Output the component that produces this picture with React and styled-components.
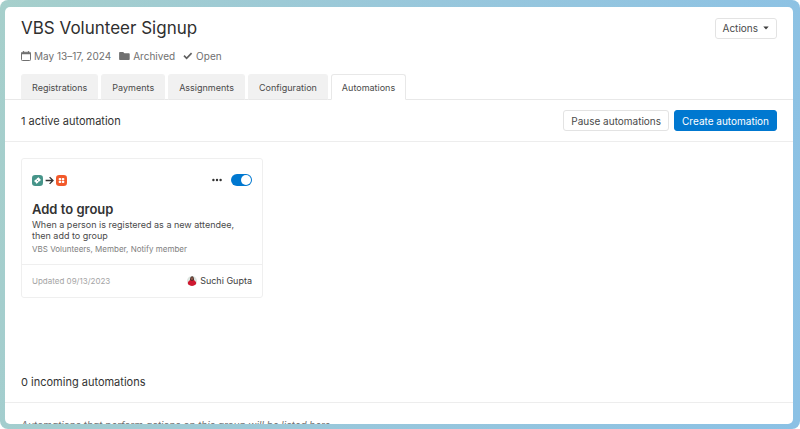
import { useState } from "react";
import styled, { createGlobalStyle } from "styled-components";

const GlobalStyle = createGlobalStyle`
    * {
        box-sizing: border-box;
    }
    body {
        margin: 0;
        background: #fff;
        color: #3d3d3d;
        font-family: Inter, "Liberation Sans", sans-serif;
        font-size: 10px;
        line-height: 16px;
    }
    h1, h2, h3, p {
        margin: 0;
        font-weight: 400;
    }
    button {
        font-family: inherit;
        cursor: pointer;
    }
`;

const Frame = styled.div`
    display: flex;
    height: 100vh;
    padding: 7px 7px 5px 5px;
    border-radius: 8px;
    background: linear-gradient(100deg, #a6cfcb, #98c7dc 50%, #8bc1e5);
    overflow: hidden;
`;

const Page = styled.main`
    flex: 1;
    border-radius: 5px;
    background: #fff;
    overflow: hidden;
`;

const Header = styled.header`
    padding: 9px 16px 0;
    border-bottom: 1px solid #e8e8e8;
`;

const TitleRow = styled.div`
    display: flex;
    align-items: center;
    justify-content: space-between;
`;

const Title = styled.h1`
    font-size: 17px;
    line-height: 24px;
    color: #2f2f2f;
`;

const Meta = styled.div`
    display: flex;
    gap: 8px;
    margin-top: 8px;
    color: #707070;
`;

const MetaItem = styled.span`
    display: flex;
    align-items: center;
    gap: 3px;
`;

const Button = styled.button`
    display: flex;
    align-items: center;
    gap: 5px;
    height: 21px;
    padding: 0 7px;
    border: 1px solid ${({ $primary }) => ($primary ? "#0078d0" : "#e3e3e3")};
    border-radius: 3px;
    background: ${({ $primary }) => ($primary ? "#0078d0" : "#fff")};
    color: ${({ $primary }) => ($primary ? "#fff" : "#4a4a4a")};
    font-size: 10px;
    line-height: 16px;
`;

const Tabs = styled.nav`
    display: flex;
    gap: 3px;
    margin: 10px 0 -1px;
`;

const Tab = styled.a`
    height: 26px;
    padding: 0 10px;
    border: 1px solid ${({ $active }) => ($active ? "#e8e8e8" : "#f1f1f1")};
    border-bottom-color: ${({ $active }) => ($active ? "#fff" : "#e8e8e8")};
    border-radius: 3px 3px 0 0;
    background: ${({ $active }) => ($active ? "#fff" : "#f1f1f1")};
    color: #4a4a4a;
    font-size: 9px;
    line-height: 25px;
    text-decoration: none;
`;

const SectionBar = styled.div`
    display: flex;
    align-items: center;
    justify-content: space-between;
    height: 42px;
    padding: 0 16px;
    border-bottom: 1px solid #ededed;
`;

const SectionTitle = styled.h2`
    font-size: 11px;
    line-height: 16px;
    color: #333;
`;

const ButtonGroup = styled.div`
    display: flex;
    gap: 5px;
`;

const CardList = styled.div`
    padding: 16px 16px 63px;
`;

const Card = styled.article`
    width: 242px;
    max-width: 100%;
    border: 1px solid #efefef;
    border-radius: 3px;
`;

const CardBody = styled.div`
    padding: 14px 10px 9px;
`;

const CardTop = styled.div`
    display: flex;
    align-items: center;
    justify-content: space-between;
    height: 14px;
`;

const IconRow = styled.div`
    display: flex;
    align-items: center;
    gap: 2px;
`;

const Controls = styled.div`
    display: flex;
    align-items: center;
    gap: 9px;
`;

const MoreButton = styled.button`
    display: flex;
    padding: 0;
    border: 0;
    background: none;
`;

const Switch = styled.input`
    appearance: none;
    display: flex;
    align-items: center;
    width: 21px;
    height: 12px;
    margin: 0;
    padding: 0 1px;
    border-radius: 6px;
    background: #bdbdbd;
    cursor: pointer;

    &::before {
        content: "";
        width: 10px;
        height: 10px;
        border-radius: 50%;
        background: #fff;
    }
    &:checked {
        justify-content: flex-end;
        background: #0078d0;
    }
`;

const CardTitle = styled.h3`
    margin: 14px 0 2px;
    font-size: 13px;
    font-weight: 600;
    line-height: 16px;
    color: #333;
`;

const Description = styled.p`
    max-width: 208px;
    font-size: 9px;
    line-height: 11px;
    color: #4a4a4a;
`;

const Details = styled.p`
    margin-top: 3px;
    font-size: 8px;
    line-height: 11px;
    color: #808080;
`;

const CardFooter = styled.footer`
    display: flex;
    align-items: center;
    justify-content: space-between;
    height: 33px;
    padding: 0 10px;
    border-top: 1px solid #efefef;
`;

const Updated = styled.span`
    font-size: 8px;
    color: #a5a5a5;
`;

const Person = styled.span`
    display: flex;
    align-items: center;
    gap: 3px;
    font-size: 9px;
`;

const EmptyNote = styled.p`
    padding: 14px 16px;
    font-style: italic;
    color: #707070;
`;

const CalendarIcon = () => (
    <svg width="10" height="10" viewBox="0 0 10 10" fill="none" stroke="#707070">
        <rect x=".5" y="1.3" width="9" height="8.2" rx=".8" />
        <path d="M.5 2.4h9" strokeWidth="1.6" />
        <path d="M2.6 0v2M7.4 0v2" />
    </svg>
);

const FolderIcon = () => (
    <svg width="11" height="10" viewBox="0 0 11 10" fill="#707070">
        <path d="M.9 1h3.3l1.2 1.3h4.5q.8 0 .8.8v5.2q0 .8-.8.8h-9q-.8 0-.8-.8V1.8Q.1 1 .9 1z" />
    </svg>
);

const CheckIcon = () => (
    <svg width="10" height="10" viewBox="0 0 10 10" fill="none" stroke="#606060" strokeWidth="1.7">
        <path d="M1 4.7l2.6 2.6 5-5.1" />
    </svg>
);

const CaretIcon = () => (
    <svg width="6" height="4" viewBox="0 0 6 4" fill="#3d3d3d">
        <path d="M.3.5h5.4L3 3.6z" />
    </svg>
);

const RegistrationsIcon = () => (
    <svg width="11" height="11" viewBox="0 0 11 11">
        <rect width="11" height="11" rx="3.2" fill="#469489" />
        <g transform="rotate(-40 5.5 5.5)" fill="#fff">
            <path d="M2.6 3.6h2.2q.7.8 1.4 0h2.2v3.8H6.2q-.7-.8-1.4 0H2.6V6.3q.8-.8 0-1.6z" />
        </g>
        <circle cx="5.5" cy="5.5" r=".6" fill="#469489" />
    </svg>
);

const GroupsIcon = () => (
    <svg width="11" height="11" viewBox="0 0 11 11">
        <rect width="11" height="11" rx="3.2" fill="#f2592a" />
        <g fill="#fff">
            <rect x="2.7" y="2.9" width="2.5" height="2.3" rx=".8" />
            <rect x="5.8" y="2.9" width="2.5" height="2.3" rx=".8" />
            <rect x="2.7" y="5.8" width="2.5" height="2.3" rx=".8" />
            <rect x="5.8" y="5.8" width="2.5" height="2.3" rx=".8" />
        </g>
    </svg>
);

const ArrowIcon = () => (
    <svg width="9" height="9" viewBox="0 0 9 9" fill="none" stroke="#333" strokeWidth="1.3">
        <path d="M.6 4.5h7.2M4.6 1.1L8 4.5 4.6 7.9" />
    </svg>
);

const DotsIcon = () => (
    <svg width="10" height="4" viewBox="0 0 10 4" fill="#333">
        <circle cx="1.4" cy="2" r="1.2" />
        <circle cx="5" cy="2" r="1.2" />
        <circle cx="8.6" cy="2" r="1.2" />
    </svg>
);

const AvatarIcon = () => (
    <svg width="10" height="10" viewBox="0 0 10 10">
        <clipPath id="avatar">
            <circle cx="5" cy="5" r="5" />
        </clipPath>
        <g clipPath="url(#avatar)">
            <rect width="10" height="10" fill="#dce4df" />
            <path d="M3 5.2Q2.8.4 5 .2T7 5.2z" fill="#4a2c28" />
            <path d="M.3 10Q.4 4.6 3.4 3.9L5 4.9l1.6-1Q9.6 4.6 9.7 10z" fill="#cf1930" />
            <ellipse cx="5" cy="2.7" rx=".9" ry="1.4" fill="#9a6250" />
        </g>
    </svg>
);

const tabs = ["Registrations", "Payments", "Assignments", "Configuration", "Automations"];

function AutomationCard() {
    const [enabled, setEnabled] = useState(true);

    return (
        <Card>
            <CardBody>
                <CardTop>
                    <IconRow>
                        <RegistrationsIcon />
                        <ArrowIcon />
                        <GroupsIcon />
                    </IconRow>
                    <Controls>
                        <MoreButton aria-label="More options">
                            <DotsIcon />
                        </MoreButton>
                        <Switch
                            type="checkbox"
                            role="switch"
                            aria-label="Automation enabled"
                            checked={enabled}
                            onChange={(e) => setEnabled(e.target.checked)}
                        />
                    </Controls>
                </CardTop>
                <CardTitle>Add to group</CardTitle>
                <Description>When a person is registered as a new attendee, then add to group</Description>
                <Details>VBS Volunteers, Member, Notify member</Details>
            </CardBody>
            <CardFooter>
                <Updated>Updated 09/13/2023</Updated>
                <Person>
                    <AvatarIcon />
                    Suchi Gupta
                </Person>
            </CardFooter>
        </Card>
    );
}

function App() {
    return (
        <>
            <GlobalStyle />
            <Frame>
                <Page>
                    <Header>
                        <TitleRow>
                            <Title>VBS Volunteer Signup</Title>
                            <Button>
                                Actions <CaretIcon />
                            </Button>
                        </TitleRow>
                        <Meta>
                            <MetaItem>
                                <CalendarIcon />
                                May 13–17, 2024
                            </MetaItem>
                            <MetaItem>
                                <FolderIcon />
                                Archived
                            </MetaItem>
                            <MetaItem>
                                <CheckIcon />
                                Open
                            </MetaItem>
                        </Meta>
                        <Tabs>
                            {tabs.map((tab) => (
                                <Tab key={tab} href="#" $active={tab === "Automations"}>
                                    {tab}
                                </Tab>
                            ))}
                        </Tabs>
                    </Header>
                    <SectionBar>
                        <SectionTitle>1 active automation</SectionTitle>
                        <ButtonGroup>
                            <Button>Pause automations</Button>
                            <Button $primary>Create automation</Button>
                        </ButtonGroup>
                    </SectionBar>
                    <CardList>
                        <AutomationCard />
                    </CardList>
                    <SectionBar>
                        <SectionTitle>0 incoming automations</SectionTitle>
                    </SectionBar>
                    <EmptyNote>Automations that perform actions on this group will be listed here.</EmptyNote>
                </Page>
            </Frame>
        </>
    );
}

export default App;
